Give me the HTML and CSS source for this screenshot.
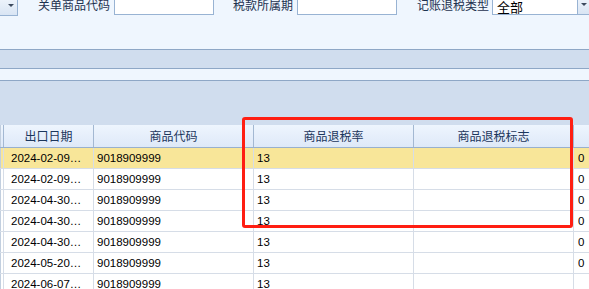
FILE: index.html
```html
<!DOCTYPE html>
<html lang="zh-CN">
<head>
    <meta charset="UTF-8">
    <title>出口退税查询</title>
    <link rel="stylesheet" href="styles.css">
</head>
<body>
    <div class="form-row">
        <div class="drop-btn first"><span class="arrow"></span></div>
        <label class="lbl lbl-1">关单商品代码</label>
        <div class="field f-1"></div>
        <label class="lbl lbl-2">税款所属期</label>
        <div class="field f-2"></div>
        <label class="lbl lbl-3">记账退税类型</label>
        <div class="select">
            <span class="select-text">全部</span>
            <div class="drop-btn"><span class="arrow"></span></div>
        </div>
    </div>
    <div class="spacer"></div>
    <div class="band band-1"></div>
    <div class="strip"></div>
    <div class="band band-2"></div>

    <div class="grid-wrap">
        <div class="grid head">
            <div class="cell edge"></div>
            <div class="cell">出口日期</div>
            <div class="cell">商品代码</div>
            <div class="cell">商品退税率</div>
            <div class="cell">商品退税标志</div>
            <div class="cell"></div>
        </div>
        <div class="grid row selected">
            <div class="cell edge"></div>
            <div class="cell">2024-02-09…</div>
            <div class="cell">9018909999</div>
            <div class="cell">13</div>
            <div class="cell"></div>
            <div class="cell">0</div>
        </div>
        <div class="grid row">
            <div class="cell edge"></div>
            <div class="cell">2024-02-09…</div>
            <div class="cell">9018909999</div>
            <div class="cell">13</div>
            <div class="cell"></div>
            <div class="cell">0</div>
        </div>
        <div class="grid row">
            <div class="cell edge"></div>
            <div class="cell">2024-04-30…</div>
            <div class="cell">9018909999</div>
            <div class="cell">13</div>
            <div class="cell"></div>
            <div class="cell">0</div>
        </div>
        <div class="grid row">
            <div class="cell edge"></div>
            <div class="cell">2024-04-30…</div>
            <div class="cell">9018909999</div>
            <div class="cell">13</div>
            <div class="cell"></div>
            <div class="cell">0</div>
        </div>
        <div class="grid row">
            <div class="cell edge"></div>
            <div class="cell">2024-04-30…</div>
            <div class="cell">9018909999</div>
            <div class="cell">13</div>
            <div class="cell"></div>
            <div class="cell">0</div>
        </div>
        <div class="grid row">
            <div class="cell edge"></div>
            <div class="cell">2024-05-20…</div>
            <div class="cell">9018909999</div>
            <div class="cell">13</div>
            <div class="cell"></div>
            <div class="cell">0</div>
        </div>
        <div class="grid row">
            <div class="cell edge"></div>
            <div class="cell">2024-06-07…</div>
            <div class="cell">9018909999</div>
            <div class="cell">13</div>
            <div class="cell"></div>
            <div class="cell"></div>
        </div>

        <div class="highlight"></div>
    </div>
</body>
</html>
```
FILE: styles.css
```css
body {
    margin: 0;
    background-color: #eff6fe;
    font-family: "Noto Sans CJK SC", "Noto Sans", sans-serif;
    font-size: 12px;
    overflow: hidden;
}
.form-row {
    display: flex;
    align-items: center;
    height: 21px;
    margin-top: -6px;
}
.drop-btn {
    width: 11px;
    height: 20px;
    border: 1px solid #98b3d3;
    background: linear-gradient(#f2f7fd, #d9e5f4);
    display: flex;
    justify-content: center;
    align-items: center;
    flex-shrink: 0;
}
.drop-btn.first {
    width: 17px;
    border-left: none;
    padding-left: 0;
}
.drop-btn.first .arrow {
    margin-left: 5px;
}
.arrow {
    width: 0;
    height: 0;
    border-left: 3px solid transparent;
    border-right: 3px solid transparent;
    border-top: 3px solid #3c4a5e;
    margin-top: 1px;
}
.lbl {
    color: #1e3250;
    white-space: nowrap;
    line-height: 20px;
    margin-top: 1px;
}
.lbl-1 { margin-left: 20px; width: 76px; }
.lbl-2 { margin-left: 19px; width: 64px; }
.lbl-3 { margin-left: 20px; width: 75px; }
.field {
    height: 19px;
    background: #fff;
    border: 1px solid #98b3d3;
}
.f-1 { width: 98px; }
.f-2 { width: 98px; }
.select {
    display: flex;
    flex: 1;
    height: 21px;
    background: #fff;
    border-left: 1px solid #98b3d3;
    border-bottom: 1px solid #98b3d3;
    box-sizing: border-box;
}
.select-text {
    flex: 1;
    padding-left: 4px;
    line-height: 21px;
    padding-top: 2px;
    color: #000;
    font-size: 13px;
}
.select .drop-btn {
    height: 20px;
    border-top: none;
    border-right: none;
    border-bottom: none;
    box-sizing: border-box;
    width: 12px;
}
.spacer {
    height: 34px;
}
.band {
    background-color: #d0ddee;
    border-top: 1px solid #8ea7c6;
}
.band-1 { height: 18px; }
.strip {
    height: 11px;
    border-top: 1px solid #8ea7c6;
    background-color: #eff6fe;
}
.band-2 { height: 44px; }
.grid-wrap {
    position: relative;
}
.grid {
    display: grid;
    grid-template-columns: 3px 90px 160px 160px 160px 1fr;
}
.head {
    height: 22px;
    background: linear-gradient(#eef5fe, #dee9f8);
    border-bottom: 1px solid #98b0cd;
    color: #1b365c;
}
.head .cell {
    text-align: center;
    line-height: 22px;
    border-left: 1px solid #a3b8d2;
}
.head .cell.edge {
    border-left: 1px solid #c2cfdf;
}
.row {
    height: 20px;
    background: #fff;
    border-bottom: 1px solid #d6dde7;
    font-family: "Liberation Sans", "Noto Sans CJK SC", sans-serif;
    font-size: 11.5px;
    color: #000;
}
.row.selected {
    background: #f8e699;
}
.row .cell {
    line-height: 21px;
    border-left: 1px solid #d6dde7;
    padding-left: 3px;
    white-space: nowrap;
    overflow: hidden;
}
.row .cell:nth-child(2) {
    padding-left: 7px;
}
.row .cell:nth-child(6) {
    padding-left: 4px;
}
.cell.edge {
    padding-left: 0;
    border-left: 1px solid #c2cfdf;
}
.highlight {
    position: absolute;
    left: 242px;
    top: -8px;
    width: 325px;
    height: 105px;
    border: 3px solid #ff1e12;
    border-radius: 3px;
}
```
